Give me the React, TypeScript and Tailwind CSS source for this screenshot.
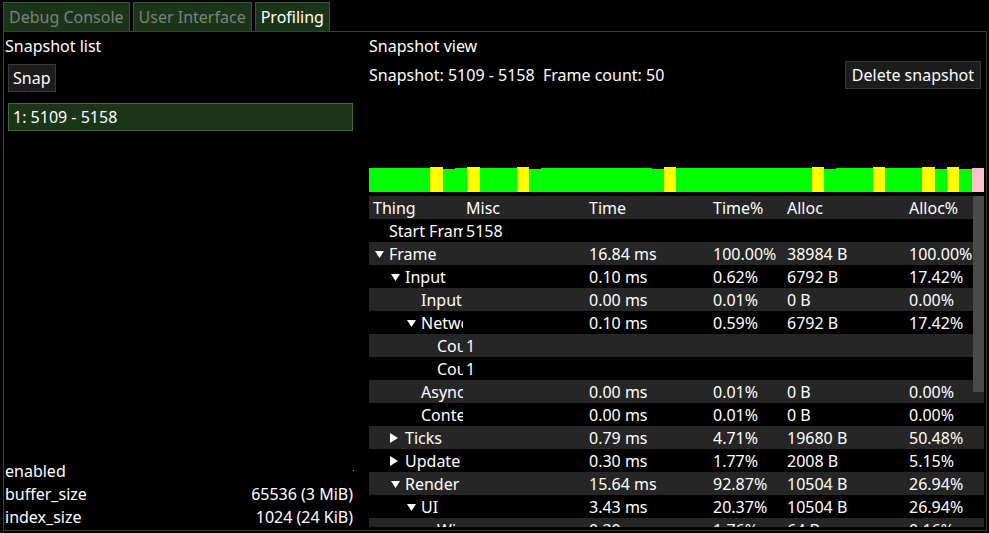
import React from "react";

type Row = {
  name: string;
  level: number;
  arrow?: "down" | "right";
  misc?: string;
  time?: string;
  timePct?: string;
  alloc?: string;
  allocPct?: string;
};

const ROWS: Row[] = [
  { name: "Start Frame", level: 0, misc: "5158" },
  { name: "Frame", level: 0, arrow: "down", time: "16.84 ms", timePct: "100.00%", alloc: "38984 B", allocPct: "100.00%" },
  { name: "Input", level: 1, arrow: "down", time: "0.10 ms", timePct: "0.62%", alloc: "6792 B", allocPct: "17.42%" },
  { name: "Input", level: 2, time: "0.00 ms", timePct: "0.01%", alloc: "0 B", allocPct: "0.00%" },
  { name: "Network", level: 2, arrow: "down", time: "0.10 ms", timePct: "0.59%", alloc: "6792 B", allocPct: "17.42%" },
  { name: "Count", level: 3, misc: "1" },
  { name: "Count", level: 3, misc: "1" },
  { name: "AsyncJobs", level: 2, time: "0.00 ms", timePct: "0.01%", alloc: "0 B", allocPct: "0.00%" },
  { name: "ContentLoad", level: 2, time: "0.00 ms", timePct: "0.01%", alloc: "0 B", allocPct: "0.00%" },
  { name: "Ticks", level: 1, arrow: "right", time: "0.79 ms", timePct: "4.71%", alloc: "19680 B", allocPct: "50.48%" },
  { name: "Update", level: 1, arrow: "right", time: "0.30 ms", timePct: "1.77%", alloc: "2008 B", allocPct: "5.15%" },
  { name: "Render", level: 1, arrow: "down", time: "15.64 ms", timePct: "92.87%", alloc: "10504 B", allocPct: "26.94%" },
  { name: "UI", level: 2, arrow: "down", time: "3.43 ms", timePct: "20.37%", alloc: "10504 B", allocPct: "26.94%" },
  { name: "Windows", level: 3, arrow: "down", time: "0.30 ms", timePct: "1.76%", alloc: "64 B", allocPct: "0.16%" },
];

const INDENT = ["pl-[0px]", "pl-[16px]", "pl-[32px]", "pl-[48px]"];

// frame kinds across the 50 captured frames
const YELLOW = [5, 8, 12, 24, 36, 41, 45, 47];
const SHORT = [6, 13, 23, 37, 46, 48];

function frameClass(i: number) {
  if (i === 49) return "h-[24px] bg-[#ffc0cb]";
  if (YELLOW.includes(i)) return "h-[25px] bg-[#ffff00]";
  if (SHORT.includes(i)) return "h-[23px] bg-[#00ff00]";
  return "h-[24px] bg-[#00ff00]";
}

function Arrow({ dir }: { dir: "down" | "right" }) {
  if (dir === "down") {
    return (
      <svg width="9" height="7" viewBox="0 0 9 7" className="ml-[2px] mt-[1px]">
        <polygon points="0,0 9,0 4.5,7" fill="#ffffff" />
      </svg>
    );
  }
  return (
    <svg width="8" height="10" viewBox="0 0 8 10" className="ml-[1px]">
      <polygon points="0,0 8,5 0,10" fill="#ffffff" />
    </svg>
  );
}

function Tab({ label, active }: { label: string; active?: boolean }) {
  return (
    <div
      className={`flex h-[29px] items-center border border-b-0 border-[#31572c] bg-[#1b3519] px-[5px] pt-[1px] ${
        active ? "text-white" : "text-[#7f7f7f]"
      }`}
    >
      {label}
    </div>
  );
}

function TableRow({ row, index }: { row: Row; index: number }) {
  return (
    <div className={`flex h-[23px] items-center px-[4px] pt-[1px] ${index % 2 === 1 ? "bg-[#262626]" : "bg-black"}`}>
      <div className={`mr-[3px] flex w-[90px] shrink-0 items-center overflow-hidden whitespace-nowrap ${INDENT[row.level]}`}>
        <span className="flex w-[16px] shrink-0 items-center">{row.arrow && <Arrow dir={row.arrow} />}</span>
        <span>{row.name}</span>
      </div>
      <div className="w-[123px] shrink-0 whitespace-nowrap">{row.misc}</div>
      <div className="w-[124px] shrink-0 whitespace-nowrap">{row.time}</div>
      <div className="w-[74px] shrink-0 whitespace-nowrap">{row.timePct}</div>
      <div className="w-[122px] shrink-0 whitespace-nowrap">{row.alloc}</div>
      <div className="flex-1 whitespace-nowrap">{row.allocPct}</div>
    </div>
  );
}

export default function App() {
  return (
    <div className="h-[533px] w-[989px] overflow-hidden bg-black text-[16px] leading-[23px] text-white [font-family:'Noto_Sans',sans-serif]">
      <div className="flex gap-[3px] pl-[3px] pt-[2px]">
        <Tab label="Debug Console" />
        <Tab label="User Interface" />
        <Tab label="Profiling" active />
      </div>

      <div className="ml-[3px] flex h-[500px] w-[984px] border border-[#3d3d3d]">
        {/* left: snapshot list */}
        <div className="flex w-[360px] shrink-0 flex-col pl-[1px] pr-[11px] pt-[3px]">
          <div>Snapshot list</div>
          <div className="ml-[3px] mt-[6px] flex">
            <div className="flex h-[28px] items-center border border-[#383838] bg-[#1c1c1c] px-[4px] pt-[1px]">Snap</div>
          </div>
          <div className="ml-[3px] mt-[11px] flex h-[28px] items-center border border-[#3d6d37] bg-[#1b3519] pl-[4px] pt-[1px]">
            1: 5109 - 5158
          </div>

          <div className="mt-auto pb-[1px]">
            <div className="relative flex h-[23px] items-center justify-between">
              <span>enabled</span>
              <span className="absolute right-[-1px] top-[10px] h-[1px] w-[1px] bg-[#9a9a9a]" />
            </div>
            <div className="flex h-[23px] items-center justify-between">
              <span>buffer_size</span>
              <span>65536 (3 MiB)</span>
            </div>
            <div className="flex h-[23px] items-center justify-between">
              <span>index_size</span>
              <span>1024 (24 KiB)</span>
            </div>
          </div>
        </div>

        {/* right: snapshot view */}
        <div className="flex min-w-0 flex-1 flex-col pl-[5px] pr-[2px] pt-[3px]">
          <div>Snapshot view</div>
          <div className="mt-[3px] flex h-[28px] items-center justify-between">
            <span className="whitespace-pre pt-[1px]">Snapshot: 5109 - 5158  Frame count: 50</span>
            <div className="mr-[3px] flex h-[28px] items-center border border-[#383838] bg-[#1c1c1c] px-[6px] pt-[1px]">
              Delete snapshot
            </div>
          </div>

          <div className="mt-[78px] flex h-[25px] items-end">
            {Array.from({ length: 50 }, (_, i) => (
              <div key={i} className={`flex-1 ${frameClass(i)}`} />
            ))}
          </div>

          <div className="relative mt-[4px] h-[331px] overflow-hidden">
            <div className="flex h-[23px] items-center bg-[#262626] px-[4px] pt-[1px]">
              <div className="mr-[3px] w-[90px] shrink-0">Thing</div>
              <div className="w-[123px] shrink-0">Misc</div>
              <div className="w-[124px] shrink-0">Time</div>
              <div className="w-[74px] shrink-0">Time%</div>
              <div className="w-[122px] shrink-0">Alloc</div>
              <div className="flex-1">Alloc%</div>
            </div>
            {ROWS.map((row, i) => (
              <TableRow key={i} row={row} index={i} />
            ))}
            <div className="absolute right-0 top-0 h-[196px] w-[11px] bg-[#4a4a4a]" />
          </div>
        </div>
      </div>
    </div>
  );
}
